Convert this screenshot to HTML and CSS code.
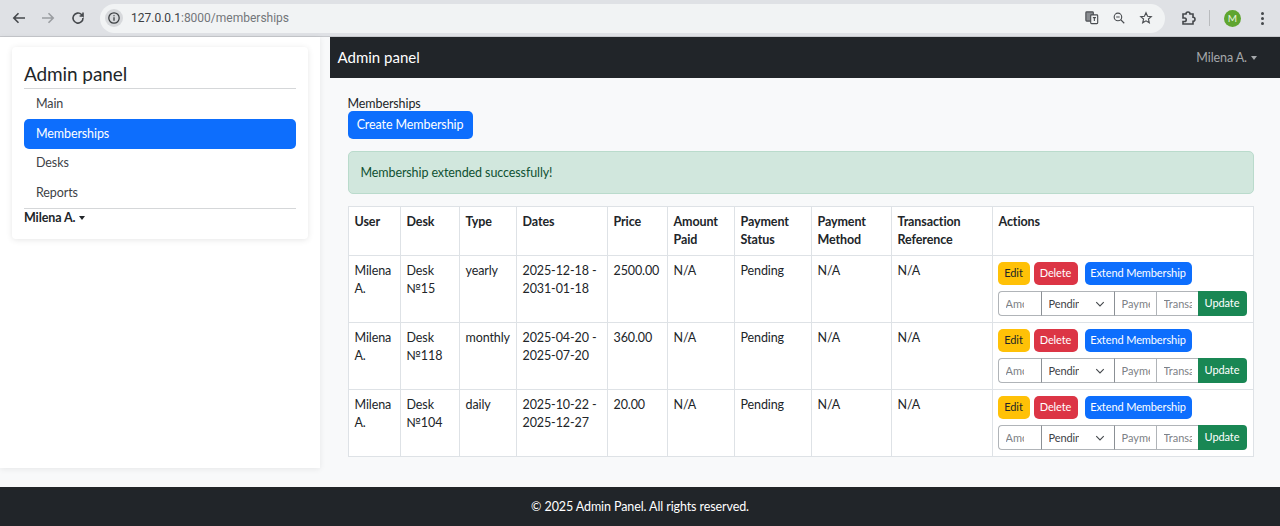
FILE: index.html
```html
<!DOCTYPE html>
<html lang="en">

<head>
    <meta charset="UTF-8">
    <title>Memberships</title>
    <link rel="stylesheet" href="styles.css">
</head>

<body>
    <header class="chrome">
        <svg class="chrome-icon back" viewBox="0 0 16 16"><path d="M14 8H3M7.500 3.300 2.800 8l4.700 4.700" /></svg>
        <svg class="chrome-icon forward dim" viewBox="0 0 16 16"><path d="M2 8H13M8.500 3.300 13.200 8l-4.700 4.700" /></svg>
        <svg class="chrome-icon reload" viewBox="0 0 16 16"><path d="M13 8a5 5 0 1 1-1.500-3.500L13 6V2.500M13 6H9.600" /></svg>
        <div class="omnibox">
            <span class="site-info">
                <svg viewBox="0 0 14 14"><circle cx="7" cy="7" r="5.200" /><path d="M7 6.300v3.400M7 4.200v1.100" /></svg>
            </span>
            <span class="url">127.0.0.1<span class="url-dim">:8000/memberships</span></span>
            <span class="omni-actions">
                <svg class="omni-icon" viewBox="0 0 16 16"><rect class="fill-dark" x="1" y="1" width="8.500" height="10.500" rx="1" /><rect class="fill-light" x="6.500" y="4.500" width="8" height="10" rx="1" /><path d="M9 7.500h3.500M10.700 7.500v4" /></svg>
                <svg class="omni-icon" viewBox="0 0 16 16"><circle cx="6.800" cy="6.800" r="4.300" /><path d="M10 10l4 4M4.800 6.800h4" /></svg>
                <svg class="omni-icon" viewBox="0 0 16 16"><path d="M8 2l1.800 4 4.200.4-3.200 2.800 1 4.300L8 11.200l-3.800 2.300 1-4.300L2 6.400 6.200 6z" /></svg>
            </span>
        </div>
        <svg class="chrome-icon puzzle" viewBox="0 0 16 16"><path d="M3 4h3a2 2 0 0 1 4 0h3v3.200a2 2 0 0 1 0 4V14H3v-2.500h1.500a1.700 1.700 0 0 0 0-3.500H3z" /></svg>
        <span class="chrome-sep"></span>
        <span class="avatar">M</span>
        <span class="kebab"><i></i><i></i><i></i></span>
    </header>

    <div class="app">
        <aside class="sidebar">
            <div class="side-card">
                <h1 class="side-title">Admin panel</h1>
                <nav class="side-nav">
                    <a class="side-link">Main</a>
                    <a class="side-link active">Memberships</a>
                    <a class="side-link">Desks</a>
                    <a class="side-link">Reports</a>
                </nav>
                <div class="side-user">Milena A. <span class="caret"></span></div>
            </div>
        </aside>

        <div class="main">
            <div class="topbar">
                <span class="brand">Admin panel</span>
                <span class="top-user">Milena A. <span class="caret"></span></span>
            </div>

            <main class="content">
                <div class="page-label">Memberships</div>
                <a class="btn btn-primary btn-create">Create Membership</a>
                <div class="alert">Membership extended successfully!</div>

                <table class="grid">
                    <colgroup>
                        <col class="c-user"><col class="c-desk"><col class="c-type"><col class="c-dates"><col class="c-price">
                        <col class="c-paid"><col class="c-status"><col class="c-method"><col class="c-ref"><col>
                    </colgroup>
                    <thead>
                        <tr>
                            <th>User</th>
                            <th>Desk</th>
                            <th>Type</th>
                            <th>Dates</th>
                            <th>Price</th>
                            <th>Amount Paid</th>
                            <th>Payment Status</th>
                            <th>Payment Method</th>
                            <th>Transaction Reference</th>
                            <th>Actions</th>
                        </tr>
                    </thead>
                    <tbody>
                        <tr>
                            <td>Milena A.</td>
                            <td>Desk №15</td>
                            <td>yearly</td>
                            <td>2025-12-18 - 2031-01-18</td>
                            <td>2500.00</td>
                            <td>N/A</td>
                            <td>Pending</td>
                            <td>N/A</td>
                            <td>N/A</td>
                            <td class="actions">
                                <div class="row-btns">
                                    <a class="btn btn-sm btn-warning">Edit</a>
                                    <a class="btn btn-sm btn-danger">Delete</a>
                                    <a class="btn btn-sm btn-primary btn-extend">Extend Membership</a>
                                </div>
                                <form class="pay-form">
                                    <input class="f-amount" placeholder="Amount">
                                    <span class="f-select"><span class="f-value">Pending</span><svg viewBox="0 0 16 16"><path d="M2 5l6 6 6-6" /></svg></span>
                                    <input class="f-method" placeholder="Payment">
                                    <input class="f-ref" placeholder="Transaction">
                                    <a class="btn-update">Update</a>
                                </form>
                            </td>
                        </tr>
                        <tr>
                            <td>Milena A.</td>
                            <td>Desk №118</td>
                            <td>monthly</td>
                            <td>2025-04-20 - 2025-07-20</td>
                            <td>360.00</td>
                            <td>N/A</td>
                            <td>Pending</td>
                            <td>N/A</td>
                            <td>N/A</td>
                            <td class="actions">
                                <div class="row-btns">
                                    <a class="btn btn-sm btn-warning">Edit</a>
                                    <a class="btn btn-sm btn-danger">Delete</a>
                                    <a class="btn btn-sm btn-primary btn-extend">Extend Membership</a>
                                </div>
                                <form class="pay-form">
                                    <input class="f-amount" placeholder="Amount">
                                    <span class="f-select"><span class="f-value">Pending</span><svg viewBox="0 0 16 16"><path d="M2 5l6 6 6-6" /></svg></span>
                                    <input class="f-method" placeholder="Payment">
                                    <input class="f-ref" placeholder="Transaction">
                                    <a class="btn-update">Update</a>
                                </form>
                            </td>
                        </tr>
                        <tr>
                            <td>Milena A.</td>
                            <td>Desk №104</td>
                            <td>daily</td>
                            <td>2025-10-22 - 2025-12-27</td>
                            <td>20.00</td>
                            <td>N/A</td>
                            <td>Pending</td>
                            <td>N/A</td>
                            <td>N/A</td>
                            <td class="actions">
                                <div class="row-btns">
                                    <a class="btn btn-sm btn-warning">Edit</a>
                                    <a class="btn btn-sm btn-danger">Delete</a>
                                    <a class="btn btn-sm btn-primary btn-extend">Extend Membership</a>
                                </div>
                                <form class="pay-form">
                                    <input class="f-amount" placeholder="Amount">
                                    <span class="f-select"><span class="f-value">Pending</span><svg viewBox="0 0 16 16"><path d="M2 5l6 6 6-6" /></svg></span>
                                    <input class="f-method" placeholder="Payment">
                                    <input class="f-ref" placeholder="Transaction">
                                    <a class="btn-update">Update</a>
                                </form>
                            </td>
                        </tr>
                    </tbody>
                </table>
            </main>
        </div>
    </div>

    <footer class="footer">© 2025 Admin Panel. All rights reserved.</footer>
</body>

</html>
```

FILE: styles.css
```css
* {
    box-sizing: border-box;
}

body {
    margin: 0;
    height: 526px;
    overflow: hidden;
    display: flex;
    flex-direction: column;
    background: #f8f9fa;
    color: #212529;
    font-family: Lato, "Noto Sans", sans-serif;
    font-size: 12.500px;
    letter-spacing: -0.1px;
    line-height: 18px;
}

/* browser bar */
.chrome {
    height: 37px;
    flex: none;
    display: flex;
    align-items: center;
    padding-left: 11px;
    background: #dfe1e5;
    border-bottom: 1px solid #c6c8cc;
    letter-spacing: 0;
}

.chrome-icon {
    width: 16px;
    height: 16px;
    flex: none;
    fill: none;
    stroke: #45484c;
    stroke-width: 1.600;
}

.chrome-icon.dim {
    stroke: #9a9da1;
}

.forward {
    margin-left: 13px;
}

.reload {
    margin-left: 14px;
}

.omnibox {
    width: 1065px;
    height: 29px;
    flex: none;
    margin-left: 14px;
    display: flex;
    align-items: center;
    padding-left: 5px;
    border-radius: 15px;
    background: #f1f3f4;
}

.site-info {
    width: 18px;
    height: 18px;
    flex: none;
    display: flex;
    align-items: center;
    justify-content: center;
    border-radius: 50%;
    background: #d7d9dc;
}

.site-info svg {
    width: 14px;
    height: 14px;
    fill: none;
    stroke: #3c4043;
    stroke-width: 1.300;
}

.url {
    margin-left: 8px;
    color: #3c4043;
    font-family: Roboto, sans-serif;
    font-size: 12px;
}

.url-dim {
    color: #73767a;
}

.omni-actions {
    margin-left: auto;
    margin-right: 12px;
    display: flex;
    gap: 13px;
}

.omni-icon {
    width: 14px;
    height: 14px;
    fill: none;
    stroke: #4a4d51;
    stroke-width: 1.300;
}

.omni-icon .fill-light {
    fill: #f1f3f4;
}

.omni-icon .fill-dark {
    fill: #8a8d91;
}

.puzzle {
    margin-left: 15px;
}

.chrome-sep {
    width: 1px;
    height: 16px;
    flex: none;
    margin: 0 14px 0 13px;
    background: #b9bbbe;
}

.avatar {
    width: 17px;
    height: 17px;
    flex: none;
    display: flex;
    align-items: center;
    justify-content: center;
    border-radius: 50%;
    background: #5fa52f;
    color: #e8f3e0;
    font-size: 10px;
}

.kebab {
    margin-left: 20px;
    display: flex;
    flex-direction: column;
    gap: 2px;
}

.kebab i {
    width: 3px;
    height: 3px;
    border-radius: 50%;
    background: #45484c;
}

.app {
    flex: 1;
    display: flex;
    min-height: 0;
}

/* sidebar */
.sidebar {
    width: 320px;
    flex: none;
    height: 431px;
    padding: 10px 12px 0;
    background: #fff;
    box-shadow: 0 1px 6px rgba(0, 0, 0, .08);
}

.side-card {
    height: 192px;
    padding: 14px 12px 0;
    border-radius: 4px;
    background: #fff;
    box-shadow: 0 1px 6px rgba(0, 0, 0, .1);
}

.side-title {
    margin: 0;
    height: 28px;
    border-bottom: 1px solid #d5d7d9;
    font-size: 19px;
    font-weight: 400;
    line-height: 26px;
}

.side-nav {
    display: flex;
    flex-direction: column;
    height: 120px;
    border-bottom: 1px solid #d5d7d9;
}

.side-link {
    flex: 1;
    padding: 0 12px;
    display: flex;
    align-items: center;
    border-radius: 5px;
    color: #3d4246;
}

.side-link.active {
    background: #0d6efd;
    color: #fff;
}

.side-user {
    font-weight: 700;
}

.caret {
    display: inline-block;
    margin-left: 1px;
    vertical-align: 2px;
    border-top: 4px solid;
    border-left: 3.500px solid transparent;
    border-right: 3.500px solid transparent;
}

/* main column */
.main {
    flex: 1;
    margin-left: 9.500px;
    min-width: 0;
}

.topbar {
    height: 41px;
    display: flex;
    align-items: center;
    justify-content: space-between;
    padding: 0 23px 0 8px;
    background: #212529;
}

.brand {
    margin-bottom: 2px;
    color: #fff;
    font-size: 15px;
    letter-spacing: 0;
}

.top-user {
    color: #a5a8ab;
}

.content {
    padding: 17px 26px 0 18px;
}

.page-label {
    height: 16px;
}

.btn {
    display: inline-flex;
    align-items: center;
    justify-content: center;
    padding-bottom: 1px;
    border-radius: 5px;
    color: #fff;
}

.btn-primary {
    background: #0d6efd;
}

.btn-create {
    width: 125px;
    height: 28px;
}

.alert {
    height: 43px;
    margin: 12px 0;
    padding: 0 12px;
    display: flex;
    align-items: center;
    border: 1px solid #badbcc;
    border-radius: 5px;
    background: #d1e7dd;
    color: #0f5132;
}

.grid {
    width: 906px;
    table-layout: fixed;
    border-collapse: collapse;
    background: #fff;
}

.c-user { width: 52px; }
.c-desk { width: 59px; }
.c-type { width: 57px; }
.c-dates { width: 91px; }
.c-price { width: 60px; }
.c-paid { width: 67px; }
.c-status { width: 77px; }
.c-method { width: 80px; }
.c-ref { width: 101px; }

.grid th,
.grid td {
    padding: 6px;
    border: 1px solid #dee2e6;
    text-align: left;
    vertical-align: top;
    font-weight: 400;
}

.grid th {
    height: 48px;
    font-weight: 700;
}

.grid td {
    height: 67px;
}

.grid td.actions {
    padding-left: 5px;
}

.row-btns {
    display: flex;
    gap: 4px;
}

.btn-sm {
    height: 23px;
    font-size: 11px;
}

.btn-warning {
    width: 32px;
    background: #ffc107;
    color: #212529;
}

.btn-danger {
    width: 44px;
    background: #dc3545;
}

.btn-extend {
    width: 107px;
    margin-left: 3px;
}

.pay-form {
    height: 25px;
    margin-top: 6px;
    display: flex;
    font-size: 11px;
}

.pay-form input,
.f-select {
    min-width: 0;
    height: 25px;
    padding: 0 6px 0 7px;
    border: 1px solid #b0b4b8;
    border-right: 0;
    background: #fff;
    font-family: inherit;
    font-size: 11px;
    outline: 0;
}

.pay-form input::placeholder {
    color: #7d8186;
}

.pay-form .f-amount {
    width: 43px;
    padding-right: 17px;
    border-radius: 4px 0 0 4px;
}

.f-select {
    width: 73px;
    display: flex;
    align-items: center;
    justify-content: space-between;
    border-left-color: #8b9095;
    color: #3d4246;
}

.f-value {
    width: 30px;
    overflow: hidden;
    white-space: nowrap;
}

.f-select svg {
    width: 10px;
    height: 10px;
    margin-right: 3px;
    fill: none;
    stroke: #44484c;
    stroke-width: 1.800;
}

.pay-form .f-method {
    border-left-color: #8b9095;
}

.f-method,
.f-ref {
    width: 42px;
}

.btn-update {
    width: 49px;
    height: 25px;
    display: flex;
    align-items: center;
    justify-content: center;
    padding-bottom: 1px;
    border-radius: 0 4px 4px 0;
    background: #198754;
    color: #fff;
}

.footer {
    height: 39px;
    flex: none;
    display: flex;
    align-items: center;
    justify-content: center;
    padding-top: 1px;
    background: #212529;
    color: #fff;
}
```
